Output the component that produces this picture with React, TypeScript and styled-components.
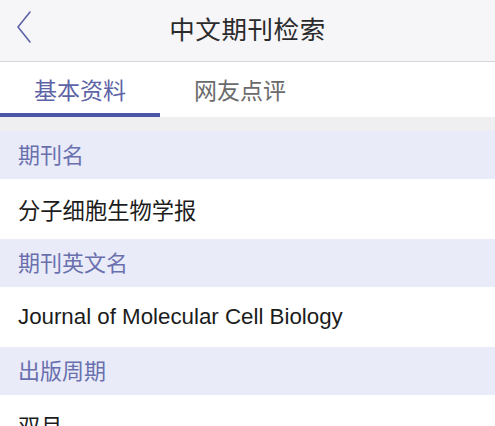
import React from 'react'
import styled, { createGlobalStyle } from 'styled-components'

const GlobalStyle = createGlobalStyle`
  html, body {
    margin: 0;
    padding: 0;
    background: #ffffff;
  }
  body {
    font-family: "Noto Sans CJK SC", "Noto Sans", "Liberation Sans", sans-serif;
  }
`

interface IField {
  label: string
  value: string
}

const fields: IField[] = [
  { label: '期刊名', value: '分子细胞生物学报' },
  { label: '期刊英文名', value: 'Journal of Molecular Cell Biology' },
  { label: '出版周期', value: '双月' },
]

const App: React.FC = () => {
  return (
    <Page>
      <GlobalStyle />
      <NavBar>
        <BackButton aria-label="back">
          <svg width="18" height="34" viewBox="0 0 18 34" fill="none">
            <path d="M15 2 L3 17 L15 32" stroke="#5c63a6" strokeWidth="1.6" strokeLinecap="round" strokeLinejoin="round" />
          </svg>
        </BackButton>
        <Title>中文期刊检索</Title>
      </NavBar>
      <Tabs>
        <Tab $active>基本资料</Tab>
        <Tab>网友点评</Tab>
      </Tabs>
      <Gap />
      {fields.map((f) => (
        <div key={f.label}>
          <SectionHeader>{f.label}</SectionHeader>
          <ValueRow>{f.value}</ValueRow>
        </div>
      ))}
    </Page>
  )
}

export default App

const Page = styled.div`
  width: 495px;
  height: 426px;
  overflow: hidden;
  background: #ffffff;
`

const NavBar = styled.header`
  position: relative;
  height: 61px;
  background: #f6f6f8;
  border-bottom: 1px solid #d6d6d9;
  display: flex;
  align-items: center;
  justify-content: center;
`

const BackButton = styled.div`
  position: absolute;
  left: 15px;
  top: 10px;
  display: flex;
`

const Title = styled.h1`
  margin: 0;
  margin-top: -6px;
  font-size: 25.5px;
  font-weight: 400;
  color: #2b2b2b;
  letter-spacing: 0.6px;
`

const Tabs = styled.nav`
  height: 55px;
  display: flex;
  background: #ffffff;
`

const Tab = styled.div<{ $active?: boolean }>`
  width: 160px;
  box-sizing: border-box;
  display: flex;
  justify-content: center;
  align-items: center;
  padding-top: 2px;
  font-size: 23px;
  color: ${(p) => (p.$active ? '#5c63a6' : '#6b6b6b')};
  border-bottom: 4px solid ${(p) => (p.$active ? '#4c56a6' : 'transparent')};
`

const Gap = styled.div`
  height: 14px;
  background: #efeff1;
`

const SectionHeader = styled.div`
  height: 48px;
  box-sizing: border-box;
  display: flex;
  align-items: center;
  padding: 0 0 4px 18px;
  background: #e9ebf9;
  font-size: 22px;
  color: #6a70ae;
`

const ValueRow = styled.div`
  height: 60px;
  display: flex;
  align-items: center;
  padding-left: 18px;
  background: #ffffff;
  font-size: 22.3px;
  color: #1c1c1c;
  font-family: "Liberation Sans", "Noto Sans CJK SC", sans-serif;
`
